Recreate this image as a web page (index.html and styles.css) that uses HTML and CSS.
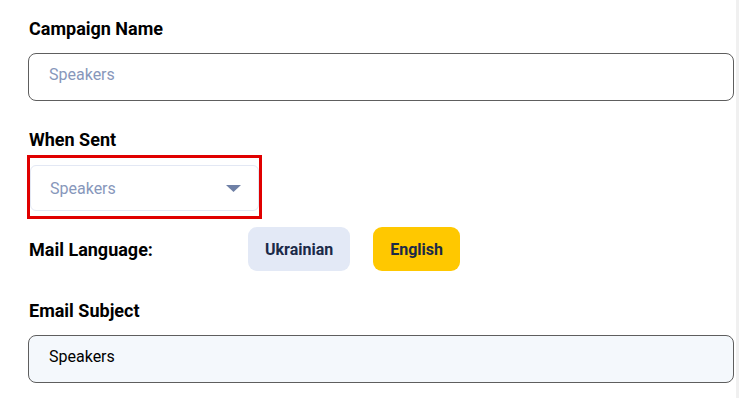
FILE: index.html
```html
<!DOCTYPE HTML>
<html>

<head>
  <title>Campaign | Settings</title>
  <meta name="viewport" content="width=device-width, initial-scale=1">
  <link rel="stylesheet" href="styles.css">
</head>

<body>
  <main class="campaign-form">
    <section class="field">
      <label for="campaign-name">Campaign Name</label>
      <input type="text" id="campaign-name" class="text-input" placeholder="Speakers" />
    </section>

    <section class="field">
      <label>When Sent</label>
      <div class="highlight">
        <div class="select">
          <span>Speakers</span>
          <svg width="15" height="7" viewBox="0 0 15 7"><path d="M0 0h15L7.5 7z" fill="#6f80a6" /></svg>
        </div>
      </div>
    </section>

    <section class="lang-row">
      <label>Mail Language:</label>
      <div class="lang-btns">
        <button class="lang-btn">Ukrainian</button>
        <button class="lang-btn active">English</button>
      </div>
    </section>

    <section class="field">
      <label for="email-subject">Email Subject</label>
      <input type="text" id="email-subject" class="text-input filled" value="Speakers" />
    </section>
  </main>
</body>

</html>
```

FILE: styles.css
```css
* {
  box-sizing: border-box;
}

body {
  margin: 0;
  background: white;
  font-family: Roboto, "Liberation Sans", sans-serif;
  color: black;
  border-right: 3px solid #f0f0f0;
  min-height: 100vh;
}

main {
  padding: 18px 0 0 28px;
  width: 734px;
}

label {
  display: block;
  font-weight: bold;
  font-size: 18px;
  line-height: 21px;
  margin-left: 1px;
}

.field {
  display: flex;
  flex-direction: column;
}

.field label {
  margin-bottom: 14px;
}

.text-input {
  height: 48px;
  width: 100%;
  border: 1px solid #5e5e5e;
  border-radius: 8px;
  padding: 0 20px 5px;
  font-family: inherit;
  font-size: 16px;
  color: black;
  background: white;
  margin-bottom: 28px;
  outline: none;

  &::placeholder {
    color: #8797bb;
  }
}

.text-input.filled {
  background: #f4f8fc;
}

.highlight {
  width: 235px;
  border: 3px solid #e00000;
  padding: 7px 0 5px;
  margin-left: -1px;
  margin-top: -9px;
}

.select {
  height: 46px;
  border: 1px solid #e3e8f4;
  border-radius: 6px;
  display: flex;
  align-items: center;
  justify-content: space-between;
  padding: 0 17px 0 19px;
  font-size: 16px;
  color: #8797bb;
}

.lang-row {
  display: flex;
  align-items: center;
  margin: 8px 0 29px;

  & label {
    width: 219px;
  }
}

.lang-btns {
  display: flex;
  gap: 23px;
}

.lang-btn {
  height: 44px;
  border: none;
  border-radius: 9px;
  padding: 0 17px;
  font-family: inherit;
  font-weight: bold;
  font-size: 16px;
  color: #1b2a48;
  background: #e3e9f6;
}

.lang-btn.active {
  background: #ffc800;
}
```
